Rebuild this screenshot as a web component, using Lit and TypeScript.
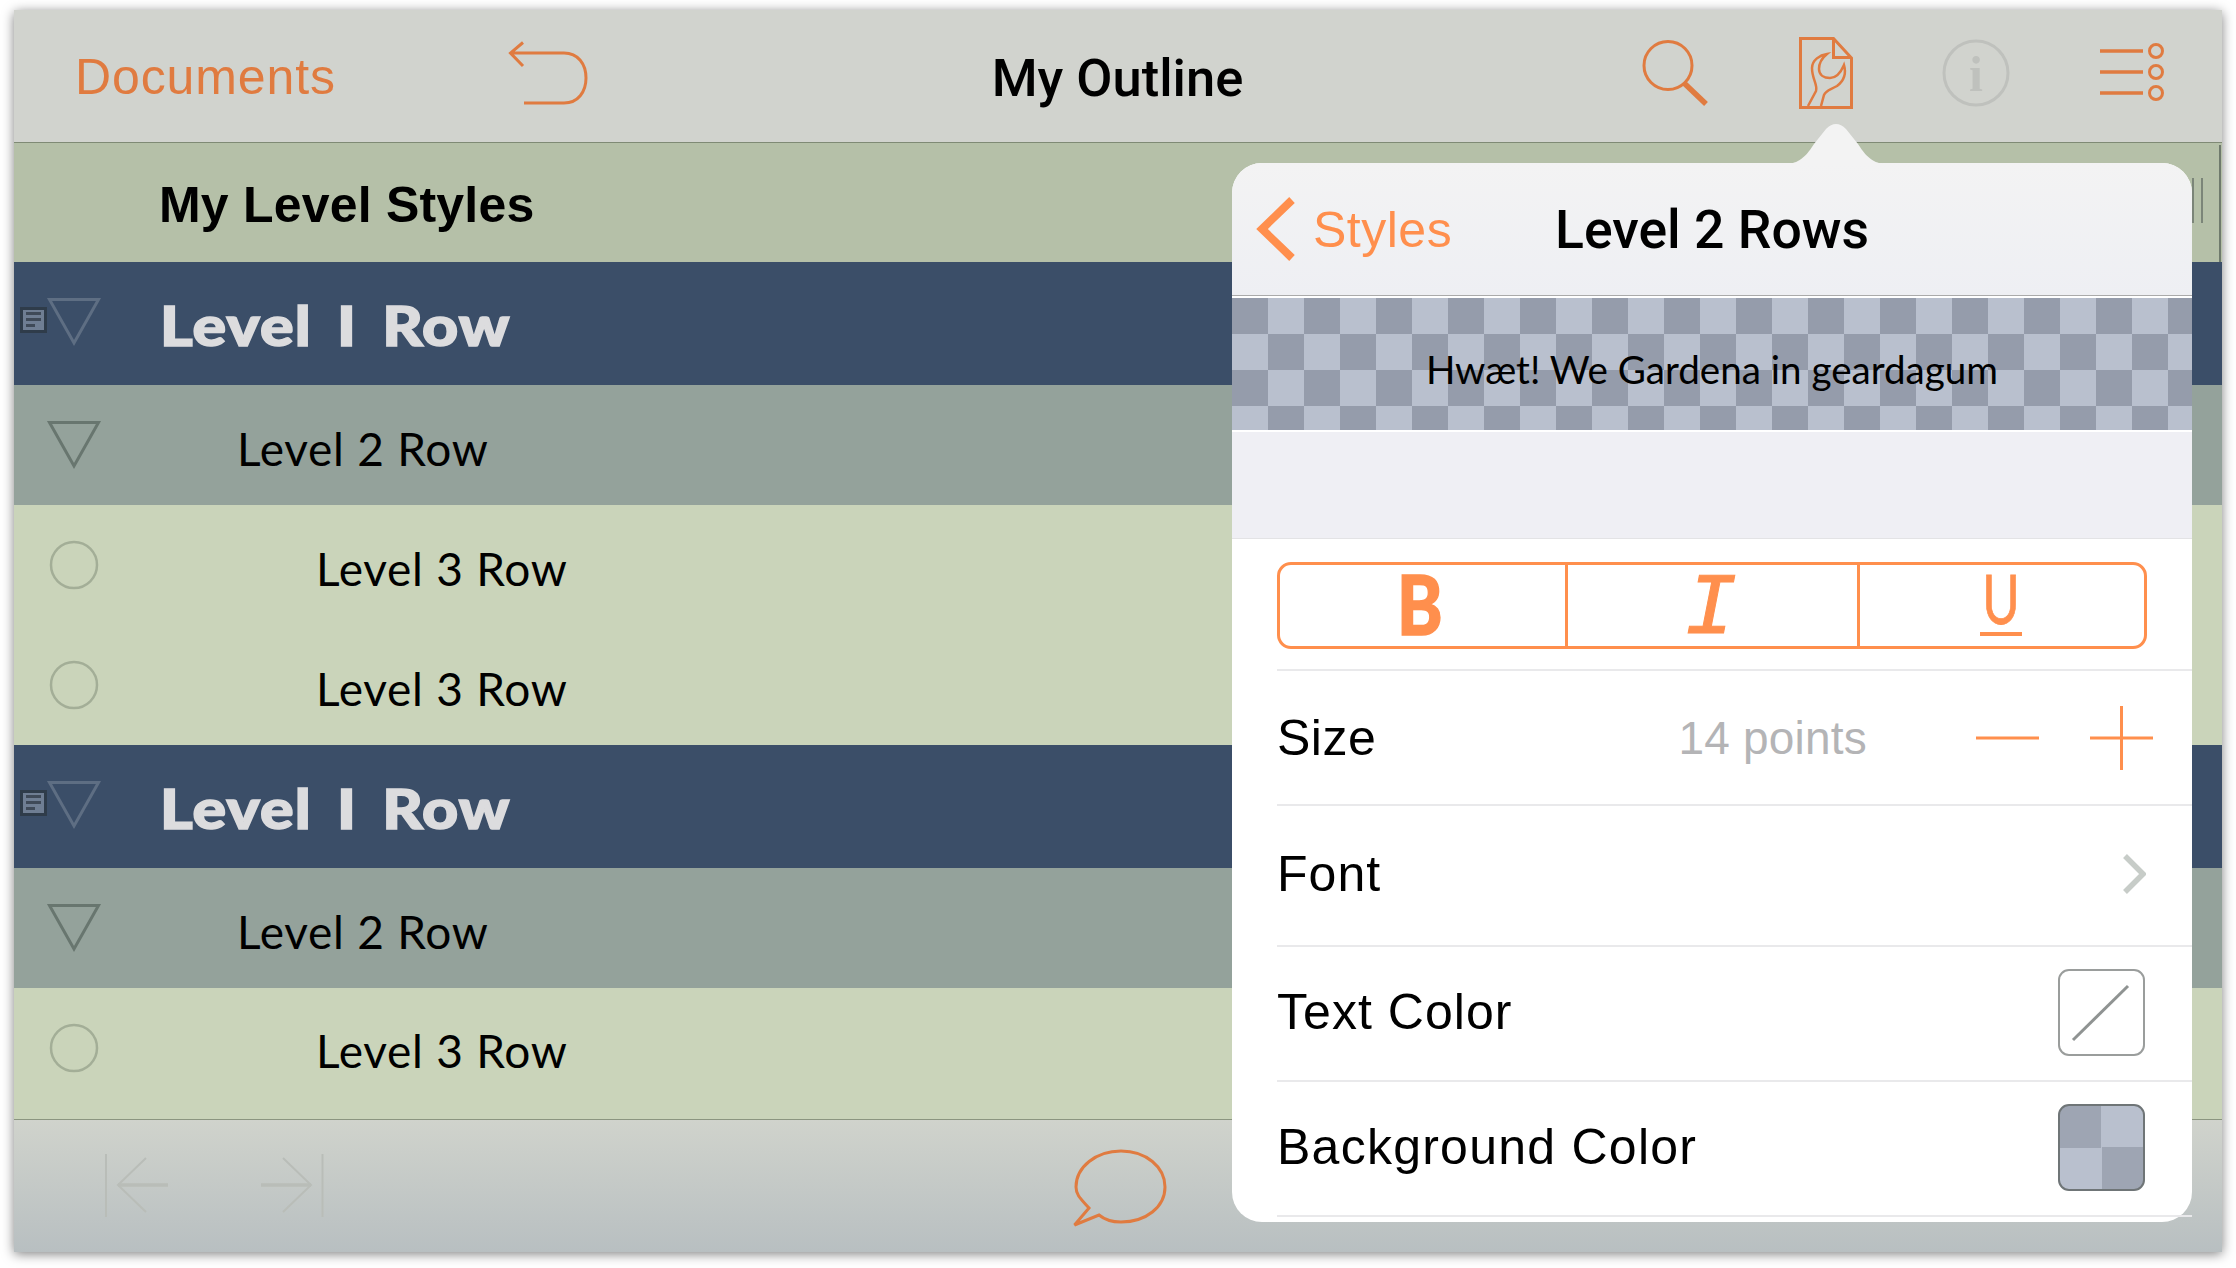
import { LitElement, html, css, nothing } from "lit";
import { customElement } from "lit/decorators.js";

const tri = html`<svg class="mark" viewBox="0 0 56 52"><polygon points="3.5,3.5 52.5,3.5 28,47" fill="none" stroke="currentColor" stroke-width="3"/></svg>`;
const circ = html`<svg class="mark" viewBox="0 0 56 52"><circle cx="28" cy="26" r="23" fill="none" stroke="currentColor" stroke-width="2.5"/></svg>`;
const note = html`<svg class="note" viewBox="0 0 27 26"><rect width="27" height="26" fill="#2f3c4a"/><rect x="3" y="3" width="21" height="20" fill="#6f7e93"/><path d="M6 6.5H21M6 12.5H21M6 18.5H15" stroke="#3f4a58" stroke-width="3"/></svg>`;

@customElement("app-root")
export class AppRoot extends LitElement {
  static styles = css`
    :host { display: block; height: 1268px; background: #fff; overflow: hidden; }
    * { box-sizing: border-box; }
    svg { display: block; flex: none; }
    .window { position: relative; margin: 10px 0 0 14px; width: 2208px; height: 1242px; border-radius: 4px 4px 0 0; background: #d0d3cc; box-shadow: 0 2px 12px rgba(0,0,0,.5); }
    .top { height: 133px; background: #d1d3ce; border-bottom: 1px solid #7f8a75; display: grid; grid-template-columns: 1fr auto 1fr; padding-top: 20px; }
    .top-left { display: flex; align-items: flex-start; padding-left: 61px; }
    .docs { width: 261px; font: 400 50px/95px "Liberation Sans", sans-serif; color: #e07b40; letter-spacing: .9px; }
    .undo { margin-left: 170px; }
    .outline { font: 500 52.5px/96px Roboto, "Liberation Sans", sans-serif; color: #000; margin-right: 1px; }
    .top-right { display: flex; align-items: flex-start; justify-content: flex-end; gap: 86px; padding-right: 57px; }
    .head { position: relative; height: 119px; background: #b5c0a8; padding: 5px 0 0 145px; font: 700 50px/114px "Liberation Sans", sans-serif; color: #000; letter-spacing: .2px; }
    .grip { position: absolute; top: 35px; left: 2178px; width: 11px; height: 45px; border-left: 2px solid #7b8578; border-right: 2px solid #7b8578; }
    .edge { position: absolute; top: 2px; right: 1px; width: 2px; height: 117px; background: #6f7a6c; }
    .row { position: relative; display: flex; align-items: center; padding-left: 32px; color: #000; font-family: Lato, sans-serif; }
    .mark { width: 56px; height: 52px; align-self: flex-start; margin-top: 34px; }
    .note { position: absolute; left: 6px; top: 45px; width: 27px; height: 26px; }
    .l1 { height: 123px; background: #3b4e68; color: #dcdcde; font-size: 55px; font-weight: 900; letter-spacing: 1px; word-spacing: 8px; }
    .l1 .mark { color: #5e6e83; }
    .l1 .label { margin-left: 58px; padding-top: 3px; transform: scaleX(1.14); transform-origin: left center; -webkit-text-stroke: 1.6px #dcdcde; }
    .l2 { height: 120px; background: #94a29b; font-size: 46px; letter-spacing: .75px; }
    .l2 .mark { color: #68766f; }
    .l2 .label { margin-left: 135px; padding-top: 6px; }
    .l3 { height: 120px; background: #cad4ba; font-size: 46px; letter-spacing: .75px; }
    .l3.last { height: 131px; }
    .l3 .mark { color: #a3ae97; }
    .l3 .label { margin-left: 214px; padding-top: 6px; }
    .l3.last .label { padding-top: 0; margin-top: -7px; }
    .bottom { height: 133px; border-top: 1px solid #8b9580; background: linear-gradient(#d0d3cc, #b8bfc1); display: flex; align-items: flex-start; padding: 25px 0 0 86px; }
    .bubble { margin-left: 738px; }

    .pop { position: absolute; left: 1218px; top: 153px; width: 960px; height: 1059px; background: #fff; border-radius: 30px; display: flex; flex-direction: column; }
    .arrow { position: absolute; left: 552px; top: -39px; }
    .pop-head { height: 133px; flex: none; border-radius: 30px 30px 0 0; border-bottom: 1px solid #aaa; background: linear-gradient(#f3f3f3, #eeeff3); display: grid; grid-template-columns: 1fr auto 1fr; align-items: center; }
    .back { display: flex; align-items: center; padding-left: 24px; color: #ff8f4d; font: 400 50px "Liberation Sans", sans-serif; gap: 17px; letter-spacing: .5px; }
    .back span { padding-top: 2px; }
    .title { font: 500 53.5px Roboto, "Liberation Sans", sans-serif; color: #000; }
    .preview { height: 132px; flex: none; margin-top: 2px; padding-top: 10px; display: flex; align-items: center; justify-content: center; font: 400 38.6px Lato, sans-serif; color: #000; background: conic-gradient(#b9c0ce 25%, #959cab 0 50%, #b9c0ce 0 75%, #959cab 0) 0 0 / 72px 72px; }
    .gap { height: 107px; flex: none; margin-top: 2px; background: #efeff4; border-bottom: 1px solid #e3e3e5; }
    .seg-row, .prop { margin-left: 45px; border-bottom: 2px solid #e9e9eb; flex: none; }
    .seg-row { height: 132px; padding: 23px 45px 0 0; }
    .seg { height: 87px; border: 3px solid #ff8f4d; border-radius: 14px; display: grid; grid-template-columns: 285px 292px 1fr; grid-template-rows: 81px; color: #ff8f4d; }
    .seg div { display: flex; align-items: center; justify-content: center; min-height: 0; }
    .seg div + div { border-left: 3px solid #ff8f4d; }
    .b { font: 900 81px/81px Lato, sans-serif; transform: translate(-3px, -2px) scaleX(.85); -webkit-text-stroke: 1.5px #ff8f4d; }
    .i { font: italic 400 88px/81px "Liberation Mono", monospace; -webkit-text-stroke: 1px #ff8f4d; transform: translate(-2px, 4px); }
    .u { font: 400 68px/43px Lato, sans-serif; transform: translateX(-1px) scaleX(.75); border-bottom: 4px solid #ff8f4d; padding-bottom: 13px; width: 56px; text-align: center; -webkit-text-stroke: .8px #ff8f4d; }
    .prop { display: flex; align-items: center; height: 135px; padding: 0 47px 3px 0; font: 400 50px "Liberation Sans", sans-serif; color: #000; justify-content: space-between; letter-spacing: 1.05px; }
    .prop.font { height: 141px; padding-right: 46px; }
    .prop.size { padding: 0 39px 0 0; letter-spacing: .5px; }
    .prop.bg { letter-spacing: 1.25px; }
    .value { margin-left: auto; margin-right: 109px; color: #b4b4b6; font-size: 46px; letter-spacing: .2px; }
    .swatch { width: 87px; height: 87px; border-radius: 11px; border: 2px solid #9a9d9c; }
    .swatch svg { width: 100%; height: 100%; }
    .swatch.chk { border-color: #6f7577; background: conic-gradient(#b9c0ce 25%, #9ea5b3 0 50%, #b9c0ce 0 75%, #9ea5b3 0); }
  `;

  private row(level: string, label: string, last = false) {
    const isOne = level === "l1";
    return html`<div class="row ${level} ${last ? "last" : ""}">
      ${isOne ? note : nothing}${level === "l3" ? circ : tri}
      <span class="label">${label}</span>
    </div>`;
  }

  render() {
    return html`<div class="window">
      <div class="top">
        <div class="top-left">
          <span class="docs">Documents</span>
          <svg class="undo" width="84" height="82" viewBox="506 30 84 82" fill="none" stroke="#e07b40" stroke-width="3"><path d="M523 42.5L510.5 53L523 66M510.5 53H564C578 53 586 64 586 78C586 92 578 103 564 103H524"/></svg>
        </div>
        <div class="outline">My Outline</div>
        <div class="top-right">
          <svg width="72" height="82" viewBox="1640 30 72 82" fill="none" stroke="#e07b40"><circle cx="1669" cy="65.5" r="24" stroke-width="3"/><path d="M1685 83L1707 104" stroke-width="5.5"/></svg>
          <svg width="58" height="82" viewBox="1798 30 58 82" fill="none" stroke="#e07b40"><path d="M1801.5 38.5H1834.5L1852.5 58V107.5H1801.5Z M1834.5 38.5V57.5H1852.5" stroke-width="3"/><path d="M1809 106L1817 91C1819 85 1813 79 1813 68C1813 60 1821 55 1828 54C1823 58 1820 63 1820 69C1820 75 1825 78 1831 78C1838 78 1842 72 1845 65C1847 72 1846 80 1838 86C1831 90 1827 90 1825 95L1822 106" stroke-width="2.5"/></svg>
          <svg width="70" height="82" viewBox="1942 30 70 82"><circle cx="1977" cy="73" r="32" fill="none" stroke="#bfc1bd" stroke-width="3"/><text x="1977" y="91" text-anchor="middle" font-family="Liberation Serif" font-weight="700" font-size="50" fill="#bfc1bd">i</text></svg>
          <svg style="margin-left:2px" width="66" height="82" viewBox="2100 30 66 82" fill="none" stroke="#e07b40" stroke-width="3"><path d="M2101 51H2144M2101 72H2144M2101 93H2144" stroke-width="3.5"/><circle cx="2157" cy="51" r="6.5"/><circle cx="2157" cy="72" r="6.5"/><circle cx="2157" cy="93" r="6.5"/></svg>
        </div>
      </div>
      <div class="head">My Level Styles<div class="grip"></div><div class="edge"></div></div>
      ${this.row("l1", "Level I Row")}
      ${this.row("l2", "Level 2 Row")}
      ${this.row("l3", "Level 3 Row")}
      ${this.row("l3", "Level 3 Row")}
      ${this.row("l1", "Level I Row")}
      ${this.row("l2", "Level 2 Row")}
      ${this.row("l3", "Level 3 Row", true)}
      <div class="bottom">
        <svg width="230" height="85" viewBox="100 1145 230 85" fill="none" stroke="#b9bdb8"><path d="M106 1154V1217M322.5 1154V1217" stroke-width="2"/><path d="M146 1158L118 1185L146 1212M283 1158L311 1185L283 1212" stroke-width="2"/><path d="M118 1185H168M261 1185H311" stroke-width="3.5"/></svg>
        <svg class="bubble" width="102" height="85" viewBox="1068 1145 102 85"><path d="M1089 1208C1081 1199 1076 1195 1076 1187C1076 1167 1096 1151 1121 1151C1146 1151 1165 1167 1165 1187C1165 1207 1146 1222 1121 1222C1112 1222 1105 1220 1099 1215L1074.5 1225Z" fill="none" stroke="#e07b40" stroke-width="3"/></svg>
      </div>
      <div class="pop">
        <svg class="arrow" width="104" height="41" viewBox="0 0 104 41"><path d="M0 41V40C12 40 20 36 30 20L42 5Q52 -5 62 5L74 20C84 36 92 40 104 40V41Z" fill="#f3f3f3"/></svg>
        <div class="pop-head">
          <div class="back"><svg width="40" height="66" viewBox="1257 196 40 66" fill="none" stroke="#ff8f4d" stroke-width="8"><path d="M1293 200L1263 229L1293 258"/></svg><span>Styles</span></div>
          <div class="title">Level 2 Rows</div>
          <div></div>
        </div>
        <div class="preview">Hwæt! We Gardena in geardagum</div>
        <div class="gap"></div>
        <div class="seg-row"><div class="seg">
          <div><span class="b">B</span></div>
          <div><span class="i">I</span></div>
          <div><span class="u">U</span></div>
        </div></div>
        <div class="prop size"><span>Size</span><span class="value">14 points</span>
          <svg width="177" height="66" viewBox="1976 704 177 66" fill="none" stroke="#ff8f4d" stroke-width="3"><path d="M1976 737H2039M2090 737H2153M2121.5 705V769"/></svg>
        </div>
        <div class="prop font"><span>Font</span>
          <svg width="24" height="40" viewBox="2124 855 24 40" fill="none" stroke="#c7ccc8" stroke-width="5.5"><path d="M2127 857L2145 875L2127 893"/></svg>
        </div>
        <div class="prop"><span>Text Color</span>
          <div class="swatch"><svg viewBox="0 0 83 83"><path d="M13 69L68 15" stroke="#8f9392" stroke-width="3"/></svg></div>
        </div>
        <div class="prop bg"><span>Background Color</span><div class="swatch chk"></div></div>
      </div>
    </div>`;
  }
}
